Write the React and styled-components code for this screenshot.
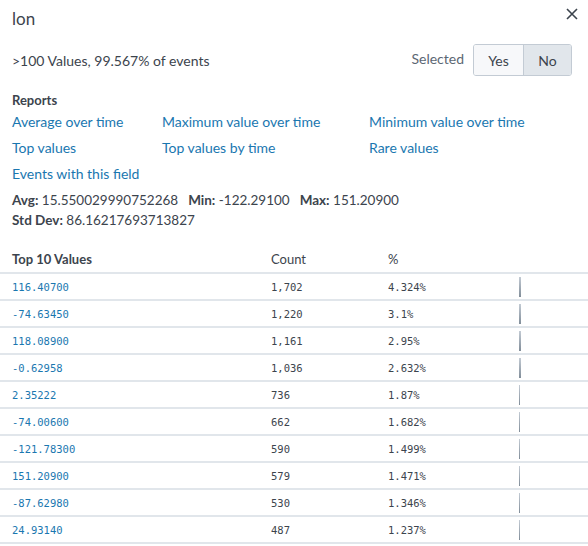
import React from "react";
import styled, { createGlobalStyle } from "styled-components";

const rows = [
  ["116.40700", "1,702", "4.324%", 2],
  ["-74.63450", "1,220", "3.1%", 2],
  ["118.08900", "1,161", "2.95%", 2],
  ["-0.62958", "1,036", "2.632%", 2],
  ["2.35222", "736", "1.87%", 1],
  ["-74.00600", "662", "1.682%", 1],
  ["-121.78300", "590", "1.499%", 1],
  ["151.20900", "579", "1.471%", 1],
  ["-87.62980", "530", "1.346%", 1],
  ["24.93140", "487", "1.237%", 1],
];

const FieldPopup = () => {
  return (
    <Panel>
      <GlobalStyle />
      <Header>
        <Title>lon</Title>
        <CloseButton aria-label="close">
          <svg width="12" height="12" viewBox="0 0 12 12">
            <path d="M1 1 L11 11 M11 1 L1 11" stroke="#3c444d" strokeWidth="1.6" />
          </svg>
        </CloseButton>
      </Header>
      <Summary>
        <span>&gt;100 Values, 99.567% of events</span>
        <SelectedGroup>
          <SelectedLabel>Selected</SelectedLabel>
          <Toggle>
            <ToggleButton>Yes</ToggleButton>
            <ToggleButton active>No</ToggleButton>
          </Toggle>
        </SelectedGroup>
      </Summary>
      <SectionTitle>Reports</SectionTitle>
      <Reports>
        <Link>Average over time</Link>
        <Link>Maximum value over time</Link>
        <Link>Minimum value over time</Link>
        <Link>Top values</Link>
        <Link>Top values by time</Link>
        <Link>Rare values</Link>
        <Link>Events with this field</Link>
      </Reports>
      <Stats>
        <div>
          <b>Avg:</b> 15.550029990752268<b>Min:</b> -122.29100<b>Max:</b> 151.20900
        </div>
        <div>
          <b>Std Dev:</b> 86.16217693713827
        </div>
      </Stats>
      <Table>
        <thead>
          <tr>
            <HeadCell bold>Top 10 Values</HeadCell>
            <HeadCell>Count</HeadCell>
            <HeadCell>%</HeadCell>
            <HeadCell />
          </tr>
        </thead>
        <tbody>
          {rows.map(([value, count, pct, bar]) => (
            <tr key={value}>
              <ValueCell>{value}</ValueCell>
              <MonoCell>{count}</MonoCell>
              <MonoCell>{pct}</MonoCell>
              <BarCell>
                <Bar wide={bar === 2} />
              </BarCell>
            </tr>
          ))}
        </tbody>
      </Table>
    </Panel>
  );
};

const GlobalStyle = createGlobalStyle`
  body {
    margin: 0;
    background: #fff;
  }
`;

const Panel = styled.div`
  width: 588px;
  height: 546px;
  overflow: hidden;
  background: #fff;
  font-family: Lato, "Liberation Sans", sans-serif;
  font-size: 14px;
  color: #3c444d;
`;

const Header = styled.div`
  display: flex;
  justify-content: space-between;
  align-items: flex-start;
  padding: 8px 12px 0 12px;
  height: 32px;
  box-sizing: border-box;
`;

const Title = styled.h1`
  margin: 0;
  font-size: 17px;
  font-weight: 400;
  line-height: 22px;
  color: #3c444d;
`;

const CloseButton = styled.button`
  border: none;
  background: none;
  padding: 0;
  margin: 0 -2px 0 0;
  width: 12px;
  height: 12px;
  display: flex;
`;

const Summary = styled.div`
  display: flex;
  justify-content: space-between;
  align-items: center;
  padding: 12px 16px 0 12px;
  height: 44px;
  box-sizing: border-box;
`;

const SelectedGroup = styled.div`
  display: flex;
  align-items: center;
  gap: 9px;
`;

const SelectedLabel = styled.span`
  color: #5c6773;
  margin-top: -4px;
`;

const Toggle = styled.div`
  display: flex;
  border: 1px solid #c3cbd4;
  border-radius: 3px;
  overflow: hidden;
`;

const ToggleButton = styled.div`
  width: ${(p) => (p.active ? "47px" : "49px")};
  height: 30px;
  display: flex;
  align-items: center;
  justify-content: center;
  background: ${(p) => (p.active ? "#e1e6eb" : "#f7f8fa")};
  border-left: ${(p) => (p.active ? "1px solid #c3cbd4" : "none")};
  color: #3c444d;
`;

const SectionTitle = styled.div`
  font-weight: 700;
  font-size: 13px;
  padding: 16px 12px 0 12px;
  line-height: 16px;
`;

const Reports = styled.div`
  display: grid;
  grid-template-columns: 150px 207px 1fr;
  grid-auto-rows: 26px;
  padding: 0 12px;
  align-items: center;
`;

const Link = styled.a`
  color: #1a77b0;
  cursor: pointer;
`;

const Stats = styled.div`
  padding: 4px 12px 0 12px;
  line-height: 20px;
  font-size: 13.5px;

  b {
    font-weight: 700;
    margin-left: 10px;
  }
  b:first-child {
    margin-left: 0;
  }
`;

const Table = styled.table`
  width: 100%;
  border-collapse: collapse;
  margin-top: 16px;
`;

const HeadCell = styled.th`
  text-align: left;
  font-weight: ${(p) => (p.bold ? 700 : 400)};
  font-size: 13px;
  height: 26px;
  padding: 0 0 0 12px;
  border-bottom: 2px solid #e1e6eb;
  &:nth-child(1) {
    width: 247px;
  }
  &:nth-child(2) {
    width: 105px;
  }
  &:nth-child(3) {
    width: 119px;
  }
`;

const ValueCell = styled.td`
  font-family: "DejaVu Sans Mono", monospace;
  font-size: 10.5px;
  color: #1a77b0;
  height: 25px;
  padding: 0 0 0 12px;
  border-bottom: 2px solid #e1e6eb;
`;

const MonoCell = styled(ValueCell)`
  color: #3c444d;
`;

const BarCell = styled.td`
  padding: 0 0 0 12px;
  border-bottom: 2px solid #e1e6eb;
  vertical-align: middle;
`;

const Bar = styled.div`
  width: ${(p) => (p.wide ? "2px" : "1px")};
  height: 20px;
  background: linear-gradient(#c3cbd4, #818d99);
`;

export default FieldPopup;
